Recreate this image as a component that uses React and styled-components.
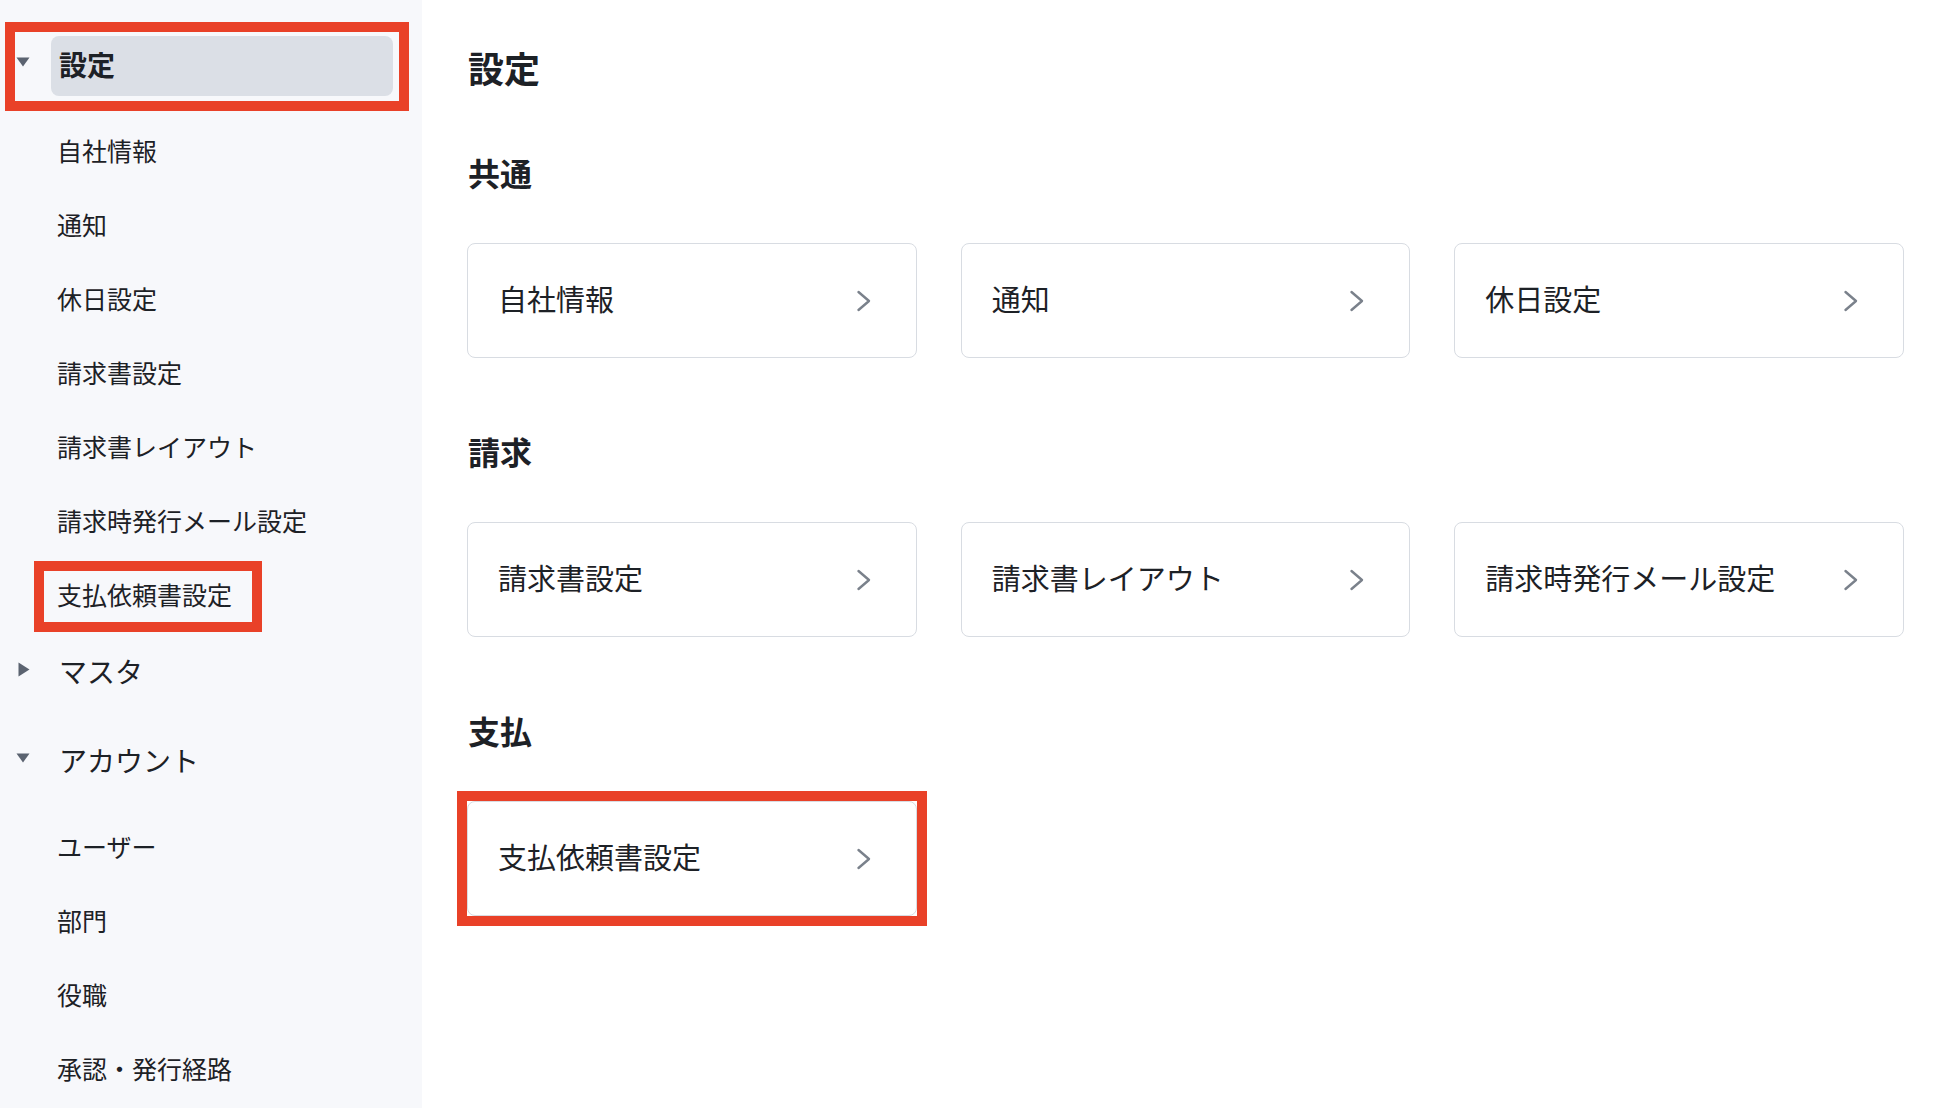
import React from "react";
import styled, { createGlobalStyle, css } from "styled-components";

const GlobalStyle = createGlobalStyle`
  html, body { margin: 0; padding: 0; }
  body {
    font-family: "Noto Sans CJK JP", "Noto Sans", sans-serif;
    color: #1d2126;
    background: #ffffff;
  }
  * { box-sizing: border-box; }
`;

const RED = "#e94128";

const Layout = styled.div`
  display: flex;
  min-height: 100vh;
  width: 1954px;
`;

const Sidebar = styled.nav`
  width: 422px;
  flex: none;
  background: #f7f8fb;
  padding-top: 26px;
  display: flex;
  flex-direction: column;
`;

const Group = styled.div`
  display: flex;
  flex-direction: column;
`;

const GroupHeader = styled.div`
  position: relative;
  display: flex;
  align-items: center;
  height: 80px;
  margin-bottom: 9px;
  padding: 10px 29px 10px 0;
  ${(p) =>
    p.$annotated &&
    css`
      &::after {
        content: "";
        position: absolute;
        left: 5px;
        right: 13px;
        top: -4px;
        bottom: -5px;
        border: 10px solid ${RED};
        pointer-events: none;
      }
    `}
`;

const CaretCell = styled.div`
  width: 51px;
  flex: none;
  display: flex;
  padding-left: ${(p) => (p.$open ? "16px" : "18px")};
  margin-top: -8px;
`;

const GroupLabel = styled.div`
  flex: 1;
  height: 60px;
  display: flex;
  align-items: center;
  padding-left: 8px;
  padding-bottom: 4px;
  border-radius: 8px;
  font-size: 28px;
  font-weight: ${(p) => (p.$active ? 700 : 400)};
  background: ${(p) => (p.$active ? "#dbdfe6" : "transparent")};
  color: #1d2126;
`;

const SubList = styled.ul`
  list-style: none;
  margin: 0;
  padding: 0;
`;

const SubItem = styled.li`
  height: 74px;
  padding-left: 57px;
  font-size: 25px;
  line-height: 70px;
  color: #1d2126;
  white-space: nowrap;
`;

const SubLabel = styled.span`
  position: relative;
  display: inline-block;
  height: 74px;
  ${(p) =>
    p.$annotated &&
    css`
      &::after {
        content: "";
        position: absolute;
        left: -23px;
        right: -30px;
        top: 2px;
        bottom: 1px;
        border: 10px solid ${RED};
        pointer-events: none;
      }
    `}
`;

const Main = styled.main`
  flex: 1;
  padding: 43px 50px 40px 45px;
  display: flex;
  flex-direction: column;
`;

const Title = styled.h1`
  margin: 0 0 62px;
  font-size: 36px;
  line-height: 48px;
  font-weight: 700;
  padding-left: 1px;
`;

const Sections = styled.div`
  display: flex;
  flex-direction: column;
  gap: 74px;
`;

const Section = styled.section`
  display: flex;
  flex-direction: column;
`;

const SectionTitle = styled.h2`
  margin: -3px 0 49px;
  padding-left: 1px;
  font-size: 32px;
  line-height: 44px;
  font-weight: 700;
`;

const CardGrid = styled.div`
  display: grid;
  grid-template-columns: repeat(3, 1fr);
  gap: 44px;
`;

const Card = styled.a`
  position: relative;
  display: flex;
  align-items: center;
  justify-content: space-between;
  height: 115px;
  padding: 0 44px 5px 30px;
  background: #fff;
  border: 1px solid #d8dce2;
  border-radius: 8px;
  font-size: 29px;
  color: #1d2126;
  text-decoration: none;
  white-space: nowrap;
  ${(p) =>
    p.$annotated &&
    css`
      &::after {
        content: "";
        position: absolute;
        inset: -11px;
        border: 10px solid ${RED};
        pointer-events: none;
      }
    `}
`;

const ChevronBox = styled.span`
  display: flex;
  margin-top: 5px;
`;

const Caret = ({ open }) =>
  open ? (
    <svg width="14" height="10" viewBox="0 0 14 10">
      <path d="M0.5 0.5 H13.5 L7 9.5 Z" fill="#5b6370" />
    </svg>
  ) : (
    <svg width="12" height="15" viewBox="0 0 12 15">
      <path d="M0.5 0.5 V14.5 L11.5 7.5 Z" fill="#5b6370" />
    </svg>
  );

const Chevron = () => (
  <ChevronBox>
    <svg width="16" height="22" viewBox="0 0 16 22" fill="none">
      <path
        d="M2.5 2 L13 11 L2.5 20"
        stroke="#7a818b"
        strokeWidth="2.4"
        strokeLinecap="round"
        strokeLinejoin="round"
      />
    </svg>
  </ChevronBox>
);

const nav = [
  {
    label: "設定",
    open: true,
    active: true,
    annotated: true,
    items: [
      "自社情報",
      "通知",
      "休日設定",
      "請求書設定",
      "請求書レイアウト",
      "請求時発行メール設定",
      { label: "支払依頼書設定", annotated: true },
    ],
  },
  { label: "マスタ", open: false, items: [] },
  {
    label: "アカウント",
    open: true,
    items: ["ユーザー", "部門", "役職", "承認・発行経路"],
  },
];

const sections = [
  { title: "共通", cards: ["自社情報", "通知", "休日設定"] },
  { title: "請求", cards: ["請求書設定", "請求書レイアウト", "請求時発行メール設定"] },
  { title: "支払", cards: [{ label: "支払依頼書設定", annotated: true }] },
];

const norm = (x) => (typeof x === "string" ? { label: x } : x);

export default function App() {
  return (
    <>
      <GlobalStyle />
      <Layout>
        <Sidebar>
          {nav.map((g) => (
            <Group key={g.label}>
              <GroupHeader $annotated={g.annotated}>
                <CaretCell $open={g.open}>
                  <Caret open={g.open} />
                </CaretCell>
                <GroupLabel $active={g.active}>{g.label}</GroupLabel>
              </GroupHeader>
              {g.open && (
                <SubList>
                  {g.items.map(norm).map((it) => (
                    <SubItem key={it.label}>
                      <SubLabel $annotated={it.annotated}>{it.label}</SubLabel>
                    </SubItem>
                  ))}
                </SubList>
              )}
            </Group>
          ))}
        </Sidebar>
        <Main>
          <Title>設定</Title>
          <Sections>
            {sections.map((s) => (
              <Section key={s.title}>
                <SectionTitle>{s.title}</SectionTitle>
                <CardGrid>
                  {s.cards.map(norm).map((c) => (
                    <Card key={c.label} href="#" $annotated={c.annotated}>
                      <span>{c.label}</span>
                      <Chevron />
                    </Card>
                  ))}
                </CardGrid>
              </Section>
            ))}
          </Sections>
        </Main>
      </Layout>
    </>
  );
}
